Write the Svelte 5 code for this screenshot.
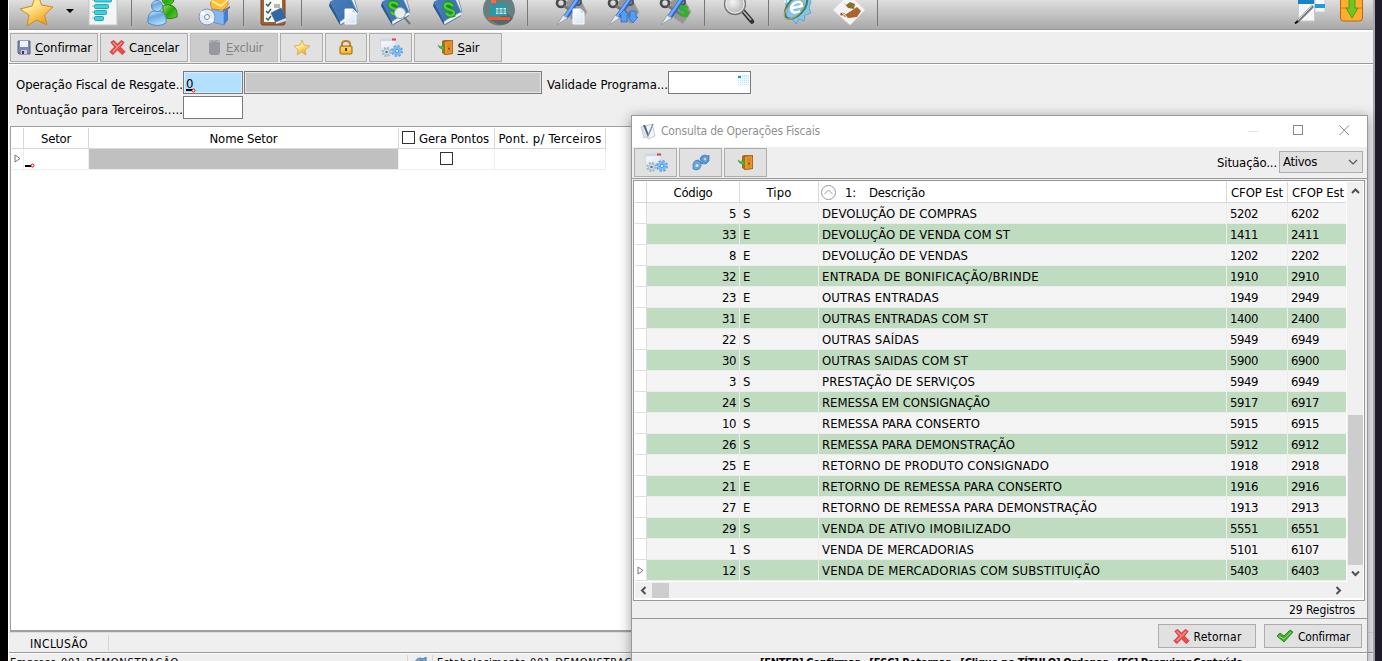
<script>
  const records = [
    [5, 'S', 'DEVOLUÇÃO DE COMPRAS', 5202, 6202, 155],
    [33, 'E', 'DEVOLUÇÃO DE VENDA COM ST', 1411, 2411, 188],
    [8, 'E', 'DEVOLUÇÃO DE VENDAS', 1202, 2202, 146],
    [32, 'E', 'ENTRADA DE BONIFICAÇÃO/BRINDE', 1910, 2910, 217],
    [23, 'E', 'OUTRAS ENTRADAS', 1949, 2949, 117],
    [31, 'E', 'OUTRAS ENTRADAS COM ST', 1400, 2400, 166],
    [22, 'S', 'OUTRAS SAÍDAS', 5949, 6949, 97],
    [30, 'S', 'OUTRAS SAIDAS COM ST', 5900, 6900, 146],
    [3, 'S', 'PRESTAÇÃO DE SERVIÇOS', 5949, 6949, 153],
    [24, 'S', 'REMESSA EM CONSIGNAÇÃO', 5917, 6917, 168],
    [10, 'S', 'REMESSA PARA CONSERTO', 5915, 6915, 158],
    [26, 'S', 'REMESSA PARA DEMONSTRAÇÃO', 5912, 6912, 193],
    [25, 'E', 'RETORNO DE PRODUTO CONSIGNADO', 1918, 2918, 227],
    [21, 'E', 'RETORNO DE REMESSA PARA CONSERTO', 1916, 2916, 240],
    [27, 'E', 'RETORNO DE REMESSA PARA DEMONSTRAÇÃO', 1913, 2913, 275],
    [29, 'S', 'VENDA DE ATIVO IMOBILIZADO', 5551, 6551, 189],
    [1, 'S', 'VENDA DE MERCADORIAS', 5101, 6107, 152],
    [12, 'S', 'VENDA DE MERCADORIAS COM SUBSTITUIÇÃO', 5403, 6403, 278]
  ];

  // Tracks a label so that it takes up the given width in pixels.
  function fit(node, width) {
    const natural = node.getBoundingClientRect().width;
    const count = [...node.textContent].length;
    node.style.letterSpacing = `${(width - natural) / count}px`;
  }
</script>

{#snippet book()}
  <path d="M31 -4L36 -6 41 12 24 23z" fill="#f4f6f8" stroke="#8796a8" />
  <path d="M13 2L31 -8 40 12 23 21z" fill="url(#navy)" stroke="#5a8cc0" stroke-width=".7" />
  <path d="M13 2L23 21V25L12 6z" fill="#2a5a92" />
  <path d="M23.500 23L40 13.500" stroke="#eef2f6" stroke-width="2.400" />
  <path d="M23.500 25L40 15.500" stroke="#3f6b9b" stroke-width=".8" />
{/snippet}

{#snippet dollar()}
  <path d="M32 6C29 2 22 3 24 7C26 11 33 9 33 13C32 17 27 16 25 13M26 1L33 17" fill="none" stroke="#1c8a1c" stroke-width="3.800" />
  <path d="M32 6C29 2 22 3 24 7C26 11 33 9 33 13C32 17 27 16 25 13" fill="none" stroke="#45d232" stroke-width="2.400" />
{/snippet}

{#snippet tools()}
  <path d="M21 2L32-6 42 12 34 24 25 18z" fill="#969696" stroke="#a8a8a8" />
  <circle cx="16" cy="3" r="4" fill="none" stroke="#4a4a4a" stroke-width="2.600" />
  <circle cx="33" cy="2" r="3" fill="none" stroke="#555" stroke-width="2" />
  <path d="M19 6L33 15" stroke="#777" stroke-width="3" />
  <path d="M36-5L20 18" stroke="#2d66c8" stroke-width="5" />
  <path d="M35-5L20 17" stroke="#73adf8" stroke-width="2.400" />
  <path d="M18 15L12 25 23 18z" fill="#e2e6ea" stroke="#90969d" stroke-width=".8" />
{/snippet}

{#snippet page()}
  <path d="M28 9H36L39 12V24H28z" fill="url(#paper)" stroke="#f9fbff" />
  <path d="M36 9V12H39" fill="#cddcf0" stroke="#b4c8e0" stroke-width=".7" />
{/snippet}

{#snippet cross()}
  <svg class="ico" width="17" height="17" viewBox="0 0 18 17">
    <path d="M2 3L5 1 9 5 13 1 16 3 12 8 17 13 14 16 9 11 4 16 1 13 6 8z" fill="#ee4a4a" stroke="#c93a3e" />
    <path d="M4 3L9 8M14 3L9 8 4 13" fill="none" stroke="#ff9a92" stroke-width="1.200" />
  </svg>
{/snippet}

{#snippet door()}
  <svg class="ico" width="18" height="17" viewBox="0 0 18 17">
    <path d="M5 2L7 1H16V15L8 16 5 14z" fill="#a86a24" />
    <path d="M7.500 2.500L15.500 1.500V14.500L7.500 15.500z" fill="#e59a30" stroke="#a8660f" stroke-width=".8" />
    <path d="M10 4L14 3.500V8L10 8.500zM10 10L14 9.700V13L10 13.500z" fill="#d98a22" /><circle cx="12" cy="9.500" r=".9" fill="#7c3c00" />
    <path d="M1 6Q3 8 5 7.500V6L8 9 5.500 11.500V10Q2 10 1 6" fill="#48b944" stroke="#2f9a33" stroke-width=".5" />
  </svg>
{/snippet}

{#snippet gears()}
  <svg class="ico" width="26" height="20" viewBox="0 0 26 20">
    <path d="M2 1.500Q10 0 18 1V12L3 13z" fill="url(#paper)" stroke="#c9cdd2" stroke-width=".7" />
    <path d="M2 1L18 .5V3L2 3.500z" fill="#d3d6da" /><rect x="14" y=".5" width="4" height="2" fill="#d0484c" />
    <circle cx="8.500" cy="14" r="4" fill="none" stroke="#9ab4c0" stroke-width="2" stroke-dasharray="1.800 1.350" />
    <circle cx="8.500" cy="14" r="3" fill="#d8e6ec" stroke="#a9bfc9" />
    <circle cx="8.500" cy="14" r="1.300" fill="#547f90" />
    <circle cx="19" cy="13" r="5" fill="none" stroke="#5ba2ea" stroke-width="2" stroke-dasharray="2.300 1.600" />
    <circle cx="19" cy="13" r="4.500" fill="#7cb8f3" /><circle cx="19" cy="13" r="1.600" fill="#e5f5ff" stroke="#468fdb" stroke-width=".8" />
  </svg>
{/snippet}

<svg width="0" height="0" class="defs" aria-hidden="true">
  <defs>
    <linearGradient id="gold" x1="0" y1="0" x2="0.5" y2="1"><stop stop-color="#ffd64a" /><stop offset=".5" stop-color="#ffe994" /><stop offset="1" stop-color="#f2a31d" /></linearGradient>
    <linearGradient id="navy" x2="1" y2="1"><stop stop-color="#4a82be" /><stop offset="1" stop-color="#386ca8" /></linearGradient>
    <linearGradient id="paper" x2="0.5" y2="1"><stop stop-color="#fff" /><stop offset="1" stop-color="#dce6f4" /></linearGradient>
    <linearGradient id="blue" x2="0.4" y2="1"><stop stop-color="#e1f2ff" /><stop offset=".45" stop-color="#69a9e2" /><stop offset="1" stop-color="#acdcfb" /></linearGradient>
    <linearGradient id="green" x2="1" y2="1"><stop stop-color="#9be750" /><stop offset=".5" stop-color="#26a510" /><stop offset="1" stop-color="#6ad034" /></linearGradient>
    <radialGradient id="glass" cx=".4" cy=".4"><stop stop-color="#f7f7f7" /><stop offset="1" stop-color="#bebebe" /></radialGradient>
  </defs>
</svg>

<div class="screen">
  <div class="main">
    <div class="toolbar">
      <svg class="slot" viewBox="0 0 52 29"><path d="M26-9L30.500 5 42 7 33.500 15 36 25 25.500 20 16 26 18 15 9 9 21 6z" fill="url(#gold)" stroke="#c98a2d" stroke-linejoin="round" /></svg>
      <svg class="caret" viewBox="0 0 14 29"><path d="M3 9H11L7 13z" /></svg>
      <svg class="slot" viewBox="0 0 52 29">
        <rect x="12" y="-4" width="28" height="29" fill="#f4f5f6" stroke="#c1c4c6" />
        <path d="M15 0H17M15 6H17M15 12H17M15 18H17" stroke="#aaa" />
        <g fill="#43d0dc" stroke="#159fb0" stroke-width=".9"><rect x="17.500" y="-3" width="17" height="5" rx="1" /><rect x="17.500" y="4.500" width="14" height="4" rx="1" /><rect x="17.500" y="10.500" width="12" height="4" rx="1" /><rect x="17.500" y="16.500" width="9" height="4" rx="1" /></g>
      </svg>
      <i class="sep a"></i>
      <svg class="slot" viewBox="0 0 52 29">
        <circle cx="32" cy="-1" r="6" fill="url(#green)" stroke="#258817" />
        <path d="M27 6Q32 3 37 6Q42 9 41 17Q35 20 27 18z" fill="url(#green)" stroke="#258817" />
        <path d="M12 23Q11 12 18 11H24Q31 13 30 23Q22 28 12 23z" fill="url(#blue)" stroke="#5589bd" />
        <circle cx="21" cy="6" r="5.500" fill="url(#blue)" stroke="#5589bd" />
      </svg>
      <svg class="slot" viewBox="0 0 52 29">
        <path d="M24 9L36 12V25L24 22z" fill="#82b7f0" stroke="#4f83c7" stroke-width=".7" /><path d="M36 12L40 8V20L36 25z" fill="#447dce" />
        <path d="M22 3L28-4 40-3 40 5 35 10 24 9z" fill="#ffbd37" stroke="#c37c10" stroke-width=".7" /><path d="M24 1L33 6 40 0" fill="none" stroke="#fff0aa" stroke-width="1.500" />
        <path d="M35 10L42 6V8L35 12z" fill="#7d6a66" />
        <circle cx="19" cy="17" r="8" fill="#dfe9f8" stroke="#8194b4" /><path d="M19 17L13 12M19 17L25 22" stroke="#fff" stroke-width="3" /><circle cx="19" cy="17" r="2.500" fill="#fff" stroke="#7289ad" />
      </svg>
      <i class="sep b"></i>
      <svg class="slot" viewBox="0 0 52 29">
        <rect x="14" y="-4" width="24" height="29" rx="2" fill="#9b6236" stroke="#724522" /><rect x="17" y="-4" width="18" height="26" fill="#fbf8f1" />
        <path d="M19 4L21 6 24 2M19 11L21 13 24 9M19 18L21 20 24 16" fill="none" stroke="#17616a" stroke-width="1.300" /><path d="M27 5H33M27 7H33" stroke="#777" />
        <path d="M24 13L34 8 39 19 29 23z" fill="#3068a4" stroke="#3068a4" stroke-width=".7" /><path d="M29 22L39 18V21L29 24z" fill="#ddd" />
      </svg>
      <i class="sep c"></i>
      <svg class="slot" viewBox="0 0 52 29">{@render book()}{@render page()}</svg>
      <svg class="slot" viewBox="0 0 52 29">{@render book()}<g transform="translate(-3 -1)">{@render dollar()}</g><path d="M35 17L41 24" stroke="#777" stroke-width="2" /><circle cx="31" cy="13" r="5.500" fill="#e8eeee" stroke="#9aa5a8" /></svg>
      <svg class="slot" viewBox="0 0 52 29">{@render book()}{@render dollar()}</svg>
      <svg class="slot" viewBox="0 0 52 29">
        <circle cx="26" cy="9.500" r="16" fill="#687f80" /><path d="M35 14L40 18Q36 25 27 25L17 20z" fill="#526a6c" />
        <path d="M18 0H23V3H18z" fill="#f46c44" /><path d="M17 4H20V7H23V4H34V16H17z" fill="#2899a8" /><path d="M23 8H33V14H23z" fill="#c7f0ee" /><path d="M23 10H33M23 12H33M26 8V14M30 8V14" stroke="#277c86" stroke-width=".8" /><path d="M15 17H37V20H15z" fill="#f0572f" />
      </svg>
      <i class="sep d"></i>
      <svg class="slot" viewBox="0 0 52 29">{@render tools()}{@render page()}</svg>
      <svg class="slot" viewBox="0 0 52 29">{@render tools()}<path d="M27 10L32 15H30V22H24V15H22zM36 23L31 17H33V11H39V17H41z" fill="#549df6" stroke="#2c69cc" stroke-width=".8" /></svg>
      <svg class="slot" viewBox="0 0 52 29">{@render tools()}<path d="M39 8Q33 5 31 8Q31 11 36 10Q41 12 38 15Q34 17 30 13M32 5L38 17" fill="none" stroke="#30b02a" stroke-width="2.600" /></svg>
      <i class="sep e"></i>
      <svg class="slot" viewBox="0 0 52 29"><path d="M30 11L39 21.500" stroke="#303030" stroke-width="4.500" stroke-linecap="round" /><path d="M30 11L38 20" stroke="#b4b4b4" stroke-width="1.800" /><circle cx="22" cy="4" r="10.500" fill="url(#glass)" stroke="#777" stroke-width="1.300" /><circle cx="22" cy="4" r="9" fill="none" stroke="#eee" /></svg>
      <i class="sep f"></i>
      <svg class="slot" viewBox="0 0 52 29">
        <path d="M12-3L37-6 40 2 38 8 40 13 34 15 33 21 28 19 25 24 21 19 14 17 17 10z" fill="#83c6eb" stroke="#5a9bc0" stroke-width=".8" /><path d="M14 0V3M17-1V2M20-1V2" stroke="#fff" stroke-width="1.500" />
        <ellipse cx="25" cy="7" rx="14" ry="8" transform="rotate(-48 25 7)" fill="none" stroke="#447a6a" stroke-width="2" /><ellipse cx="23" cy="10" rx="12" ry="6" transform="rotate(-42 23 10)" fill="none" stroke="#a8a861" stroke-width="1.200" />
        <path d="M21 8L31 6Q31 1 26 2Q20 4 20 9Q22 15 29 11" fill="none" stroke="#fff" stroke-width="2.500" />
      </svg>
      <svg class="slot" viewBox="0 0 52 29"><path d="M10 10L26-6 42 10 27 25z" fill="#f4f4f4" stroke="#ddd" /><path d="M20 2L23 5 27 2 32 4 31 9 25 8z" fill="#87742b" /><path d="M18 12L23 14 28 11 34 7 38 11 34 17 26 18 17 15" fill="#ac632f" /><path d="M17 11L24 17M18 17L25 12" stroke="#fff" stroke-width=".8" /></svg>
      <i class="sep g"></i>
      <span class="grow"></span>
      <svg class="slot end" viewBox="0 0 42 29"><rect x="9.500" y="-3" width="16" height="24" fill="#f5f6f7" stroke="#c7cacc" /><path d="M9 0H25V4H9z" fill="#1684ca" /><rect x="26" y="-1" width="10" height="13" fill="#f5f6f7" stroke="#c7cacc" /><path d="M26 4H36V8H26z" fill="#229ae0" /><path d="M8 22L24 6" stroke="#777" stroke-width="3" /><path d="M8 21L23 6" stroke="#ddd" /><path d="M6 23.500L9 21" stroke="#111" stroke-width="2" /></svg>
      <svg class="slot end" viewBox="0 0 42 29"><rect x="9.500" y="-5" width="22" height="26" rx="3" fill="#ffad2d" stroke="#b8690e" /><path d="M9.500 8H16L18 10H25L27 8H31.500" fill="none" stroke="#d87e0d" /><path d="M18-2H24V8H27L21 18 15 8H18z" fill="#6cc720" stroke="#378a12" stroke-width=".7" /></svg>
    </div>

    <div class="commands">
      <button class="wide"><svg class="ico" width="16" height="17" viewBox="0 0 16 17"><path d="M2 2H14V15H3L2 14z" fill="#7f88ad" stroke="#5b6188" /><path d="M4 2H12V8H4z" fill="#eef4fc" /><path d="M5 11H11V15H5z" fill="#c8cbd7" /><path d="M6 12H8V15H6z" fill="#34385d" /></svg><span use:fit={57}><u>C</u>onfirmar</span></button>
      <button class="wide">{@render cross()}<span use:fit={50}>Ca<u>n</u>celar</span></button>
      <button class="wide off"><svg class="ico" width="18" height="17" viewBox="0 0 18 17"><rect x="4" y="1" width="11" height="15" rx="3" fill="#98999e" /><path d="M4.500 3Q9 0 14.500 3" fill="none" stroke="#b1c4c6" /></svg><span use:fit={37}><u>E</u>xcluir</span></button>
      <button class="small"><svg class="ico" width="18" height="17" viewBox="0 0 18 17"><path d="M9 1L11 6 17 7 12 11 13 16 8.500 13 4 16 5 11 1 7 7 6z" fill="url(#gold)" stroke="#d9a858" stroke-width=".8" /></svg></button>
      <button class="small lock"><svg class="ico" width="16" height="17" viewBox="0 0 16 17"><path d="M4 8V5Q4 2 8 2T12 5V8" fill="none" stroke="#b5852c" stroke-width="2" /><rect x="2" y="7" width="12" height="8" rx="1" fill="#f4ba35" stroke="#9c6610" /><path d="M3 9H13M3 11H13" stroke="#ffe179" /><path d="M8 9V12" stroke="#583400" stroke-width="2" /></svg></button>
      <button class="small">{@render gears()}</button>
      <button class="wide">{@render door()}<span use:fit={22}><u>S</u>air</span></button>
    </div>

    <div class="form">
      <div class="line first">
        <label use:fit={167} for="operation">Operação Fiscal de Resgate..</label>
        <div class="field active" id="operation"><u>0</u><svg width="5" height="5" viewBox="0 0 5 5"><circle cx="2.500" cy="2.500" r="1.500" fill="#fff" stroke="#e00000" /></svg></div>
        <div class="field disabled"></div>
        <label use:fit={121} for="validity">Validade Programa...</label>
        <div class="field date" id="validity"><svg width="11" height="10" viewBox="0 0 11 10"><rect width="11" height="10" fill="#b8e6fc" /><path d="M1.500 0V10M3.500 0V10M5.500 0V10M7.500 0V10M9.500 0V10M0 2.500H11M0 4.500H11M0 6.500H11M0 8.500H11" stroke="#fff" stroke-width=".8" /><path d="M0 1H3V3H0z" fill="#1592db" /></svg></div>
      </div>
      <div class="line second">
        <label use:fit={167} for="points">Pontuação para Terceiros.....</label>
        <div class="field points" id="points"></div>
      </div>
    </div>

    <div class="sectors">
      <div class="srow head"><b></b><b><span use:fit={30}>Setor</span></b><b><span use:fit={68}>Nome Setor</span></b><b class="check"><i class="box"></i><span use:fit={70}>Gera Pontos</span></b><b><span use:fit={103}>Pont. p/ Terceiros</span></b></div>
      <div class="srow"><b><svg width="7" height="9" viewBox="0 0 7 9"><path d="M1 1V8L6 4.500z" fill="#fff" stroke="#777" /></svg></b><b class="cursor"><svg width="10" height="5" viewBox="0 0 10 5"><path d="M0 2H6V4H0z" /><circle cx="7.500" cy="2.500" r="1.500" fill="#fff" stroke="#e00000" /></svg></b><b class="gray"></b><b><i class="box"></i></b><b></b></div>
    </div>
    <div class="mode"><span use:fit={58}>INCLUSÃO</span></div>
    <div class="company"><div class="firm"><span use:fit={51}>Empresa: </span><span use:fit={118}>001-DEMONSTRAÇÃO</span></div><div class="sync"><svg width="14" height="12" viewBox="0 0 14 12"><path d="M1 5Q4-1 9 2L12 0V6H7L9 4Q5 2 4 6z" fill="#76a9d8" stroke="#4679ac" /></svg></div><div class="branch"><span use:fit={93}>Estabelecimento: </span><span use:fit={118}>001-DEMONSTRAÇÃO</span></div></div>
  </div>

  <section class="dialog">
    <header>
      <svg width="17" height="17" viewBox="0 0 17 17"><path d="M1 4L7 2 10 13 4 15z" fill="#dce3e8" stroke="#c3ccd2" /><path d="M6 3L12 1 15 13 8 16z" fill="#f5f7f8" stroke="#c3ccd2" /><path d="M3 2L5 2 9 12 8 14z" fill="#3e6688" /><path d="M8 13L13 1" fill="none" stroke="#7d97aa" stroke-width="1.500" /></svg>
      <span class="title" use:fit={159}>Consulta de Operações Fiscais</span>
      <svg class="window" width="104" height="14" viewBox="0 0 104 14"><path d="M1 7.500H11" stroke="#e4e4e4" /><rect x="46.500" y="1.500" width="9" height="9" fill="none" stroke="#888" /><path d="M92.500 1.500L102 11M102 1.500L92.500 11" stroke="#888" /></svg>
    </header>
    <div class="filter">
      <button class="small">{@render gears()}</button>
      <button class="small"><svg class="ico" width="18" height="17" viewBox="0 0 18 17"><path d="M8 5Q9 1 13 1L16 2 17 1V7L14 10Q10 10 9 9L11 7Q8 7 8 5z" fill="#5c96cf" stroke="#3f7cba" stroke-width=".7" /><path d="M1 10Q2 6 6 6L8 8 9 7V12Q8 16 4 16L1 15z" fill="#6ba3d8" stroke="#3f7cba" stroke-width=".7" /><circle cx="13" cy="5" r="1.500" fill="#bcd8f0" /><circle cx="5" cy="11.500" r="1.600" fill="#cfe4f5" /><path d="M6 6L11 10" stroke="#3f7cba" /></svg></button>
      <button class="small">{@render door()}</button>
      <span class="grow"></span>
      <span use:fit={60}>Situação...</span>
      <div class="select"><span use:fit={34}>Ativos</span><svg width="10" height="7" viewBox="0 0 10 7"><path d="M1 1L5 5 9 1" fill="none" stroke="#555" stroke-width="1.200" /></svg></div>
    </div>
    <div class="results">
      <div class="body">
        <div class="table">
          <div class="row top"><b></b><b><span use:fit={39}>Código</span></b><b><span use:fit={25}>Tipo</span></b><b class="sort"><svg width="17" height="17" viewBox="0 0 17 17"><circle cx="8.500" cy="8.500" r="7" fill="none" stroke="#999" /><path d="M4.500 10L8.500 6 12.500 10" fill="none" stroke="#999" /></svg><span class="rank" use:fit={11}>1:</span><span use:fit={56}>Descrição</span></b><b><span use:fit={52}>CFOP Est</span></b><b><span use:fit={52}>CFOP Est</span></b></div>
          {#each records as [code, type, name, inside, outside, width], index}
            <div class="row" class:even={index % 2}>
              <b>{#if index === records.length - 1}<svg width="7" height="9" viewBox="0 0 7 9"><path d="M1 1V8L6 4.500z" fill="#fff" stroke="#777" /></svg>{/if}</b>
              <b class="num"><span use:fit={code > 9 ? 14 : 7}>{code}</span></b><b>{type}</b><b><span use:fit={width}>{name}</span></b><b><span use:fit={28}>{inside}</span></b><b><span use:fit={28}>{outside}</span></b>
            </div>
          {/each}
        </div>
        <div class="vscroll"><svg width="9" height="7" viewBox="0 0 9 7"><path d="M1 5L4.500 1.500 8 5" fill="none" stroke="#505050" stroke-width="2" /></svg><i></i><svg width="9" height="7" viewBox="0 0 9 7"><path d="M1 1.500L4.500 5 8 1.500" fill="none" stroke="#505050" stroke-width="2" /></svg></div>
      </div>
      <div class="hscroll"><svg width="7" height="9" viewBox="0 0 7 9"><path d="M5.500 1L2 4.500 5.500 8" fill="none" stroke="#505050" stroke-width="2" /></svg><i></i><svg width="7" height="9" viewBox="0 0 7 9"><path d="M1.500 1L5 4.500 1.500 8" fill="none" stroke="#505050" stroke-width="2" /></svg></div>
    </div>
    <div class="total"><span use:fit={66}>29 Registros</span></div>
    <div class="actions">
      <button>{@render cross()}<span use:fit={48}>Retornar</span></button>
      <button><svg class="ico" width="18" height="17" viewBox="0 0 18 17"><path d="M1 8L4 5 8 8 14 2 17 4 8 14z" fill="#3fae2e" stroke="#2b8a25" /><path d="M3 8L8 11 15 4" fill="none" stroke="#8fdc66" /></svg><span use:fit={52}>Confirmar</span></button>
    </div>
    <footer><span use:fit={99}>[ENTER] Confirmar</span><span use:fit={81}>[ESC] Retornar</span><span use:fit={147}>[Clique no TÍTULO] Ordenar</span><span use:fit={125}>[F6] Pesquisar Conteúdo</span></footer>
  </section>
</div>

<style>
  :global(body) { margin: 0; overflow: hidden; background: #000; }
  * { box-sizing: border-box; }
  .defs { position: absolute; }
  svg { flex: none; display: block; }
  span, label { white-space: pre; flex: none; }
  u { text-underline-offset: 2px; text-decoration-thickness: 1px; }
  .screen { position: relative; width: 1382px; height: 661px; overflow: hidden; padding-left: 8px; background: linear-gradient(90deg, #000 8px, #1f1b2b 8px); font: 13px/16px "DejaVu Sans Condensed", "DejaVu Sans", sans-serif; font-stretch: condensed; color: #000; }
  .main { width: 1367px; height: 661px; background: #efefef; border-left: 1px solid #fff; border-right: 2px solid #aaa; display: flex; flex-direction: column; overflow: hidden; }
  .toolbar { height: 32px; flex: none; display: flex; padding-left: 2px; background: linear-gradient(#dedede 0, #a9a9a9 29px, #9a9a9a 29px, #999 30px, #fff 30px); }
  .slot { width: 52px; height: 29px; overflow: hidden; }
  .slot.end { width: 42px; }
  .caret { width: 14px; height: 29px; }
  .sep { height: 26px; background: linear-gradient(#777, #777) 2px 0 / 1px 26px no-repeat; }
  .sep.a, .sep.b { width: 7px; }
  .sep.b, .sep.e, .sep.f, .sep.g { background-position-x: 3px; }
  .sep.c { width: 18px; } .sep.d { width: 20px; } .sep.e { width: 12px; } .sep.f, .sep.g { width: 6px; }
  .sep.g { background-position-x: 2px; }
  .grow { flex: 1; }
  .commands { height: 33px; flex: none; display: flex; gap: 2px; padding: 1px 0 0 1px; background: linear-gradient(#efefef 31px, #999 31px, #999 32px, #fff 32px); }
  button { height: 29px; padding: 0; border: 1px solid #adadad; background: #e1e1e1; font: inherit; color: #000; display: flex; align-items: center; justify-content: center; gap: 2px; flex: none; }
  .wide { width: 88px; }
  .small { width: 43px; }
  .lock { width: 42px; }
  .off { background: #ccc; border-color: #bfbfbf; color: #838383; }
  .commands .wide { gap: 3px; }
  .commands .wide span { padding-top: 1px; }
  .form { height: 61px; flex: none; padding: 6px 0 0 7px; }
  .line { display: flex; height: 24px; }
  .line.second { margin-top: 1px; }
  .line label { padding-top: 6px; }
  .field { height: 23px; border: 1px solid #7a7a7a; background: #fff; }
  .active { width: 60px; background: #b3e0ff; display: flex; padding: 3px 0 0 2px; line-height: 17px; box-shadow: inset 0 0 0 1px #d9efff; }
  .active svg { margin: 13px 0 0 -2px; }
  .active u { text-decoration-thickness: 2px; text-underline-offset: 1px; }
  .disabled { width: 298px; margin: 0 5px 0 1px; background: #c8c8c8; box-shadow: inset 0 0 0 1px #e6e6e6; }
  .date { width: 83px; display: flex; justify-content: flex-end; padding: 3px 1px; }
  .points { width: 60px; }
  .sectors { height: 506px; flex: none; margin: 0 6px 0 1px; border: 1px solid #a0a0a0; border-bottom-width: 2px; background: #fff; padding: 1px; }
  .srow { display: grid; grid-template-columns: 12px 65px 310px 96px 111px; height: 21px; width: 594px; }
  .srow b { font-weight: normal; border: solid #eee; border-width: 0 1px 1px 0; display: flex; align-items: center; justify-content: center; }
  .srow b:first-child { padding-bottom: 1px; }
  .head b { border-color: #d9d9d9; padding-top: 1px; }
  .head .check { gap: 4px; padding: 0 2px 1px 0; }
  .head .check span { padding-top: 2px; }
  .box { width: 13px; height: 13px; border: 1px solid #333; background: #fff; margin-bottom: 1px; }
  .srow .gray { background: #c0c0c0; }
  .srow .cursor { justify-content: flex-start; align-items: flex-end; padding: 0 0 1px 1px; }
  .mode { height: 21px; flex: none; padding: 3px 0 0 21px; font-size: 12px; border-top: 1px solid #ddd; border-bottom: 1px solid #999; background: linear-gradient(#d6d6d6, #d6d6d6) 99px 2px / 1px 16px no-repeat; }
  .company { height: 20px; display: flex; border-top: 1px solid #fff; font-size: 11px; padding-top: 1px; }
  .company div { flex: none; border-right: 1px solid #d5d5d5; }
  .firm { width: 399px; padding-left: 1px; }
  .sync { width: 25px; padding: 2px 6px; }
  .branch { width: 800px; padding-left: 4px; }
  .dialog { position: absolute; left: 631px; top: 115px; width: 737px; height: 560px; border: 1px solid #999; background: #efefef; box-shadow: 0 2px 12px rgba(0,0,0,.38); }
  header { height: 31px; background: #fff; display: flex; align-items: center; padding: 0 0 1px 8px; }
  .title { color: #929292; margin-left: 4px; font-size: 12px; }
  .window { margin-left: 427px; }
  .filter { height: 32px; display: flex; gap: 2px; padding: 1px 4px 0 2px; border-bottom: 1px solid #999; align-items: flex-start; }
  .filter > span { padding-top: 7px; }
  .select { width: 84px; height: 22px; margin-top: 3px; border: 1px solid #adadad; background: #e1e1e1; display: flex; align-items: center; justify-content: space-between; padding: 0 4px 0 3px; }
  .results { margin: 1px 2px 0 1px; height: 421px; border: 1px solid #999; background: #fff; padding: 1px 1px 0; }
  .body { display: flex; height: 400px; }
  .table { width: 713px; overflow: hidden; }
  .row { display: grid; grid-template-columns: 12px 93px 79px 408px 61px 60px; height: 21px; background: #f4f4f4; }
  .row b { font-weight: normal; border: solid #ededed; border-width: 0 1px 1px 0; padding: 1px 0 0 3px; display: flex; align-items: center; min-width: 0; }
  .row b:first-child { background: #fff; border-color: #ddd; padding: 0; justify-content: center; }
  .row b:last-child { border-right: 0; }
  .row.even { background: #c0dcc0; }
  .row .num { justify-content: flex-end; padding-right: 3px; }
  .row.top { background: #fff; }
  .row.top b { border-color: #d8d8d8; justify-content: center; padding: 1px 0 0; }
  .row.top .sort { justify-content: flex-start; padding: 0 0 0 1px; }
  .row.top .sort span { padding-top: 1px; }
  .rank { margin: 0 13px 0 8px; }
  .vscroll { width: 16px; margin-left: 1px; background: #f0f0f0; display: flex; flex-direction: column; align-items: center; padding-top: 6px; }
  .vscroll i { width: 15px; height: 150px; background: #cdcdcd; margin: 220px 0 5px; }
  .hscroll { height: 16px; background: #f0f0f0; display: flex; align-items: center; padding: 0 21px 0 5px; }
  .hscroll i { width: 17px; height: 15px; margin-left: 5px; background: #cdcdcd; }
  .hscroll svg:last-child { margin-left: auto; }
  .total { height: 18px; display: flex; justify-content: flex-end; padding: 1px 12px 0; border-bottom: 1px solid #999; font-size: 12px; }
  .actions { height: 34px; border-bottom: 1px solid #999; display: flex; justify-content: flex-end; gap: 8px; padding: 5px 5px 0; }
  .actions button { width: 98px; height: 24px; gap: 4px; font-size: 12px; }
  .actions button span { padding-top: 1px; }
  footer { display: flex; gap: 10px; padding: 1px 0 0 128px; font-size: 11px; font-weight: bold; border-top: 1px solid #fff; }
</style>
